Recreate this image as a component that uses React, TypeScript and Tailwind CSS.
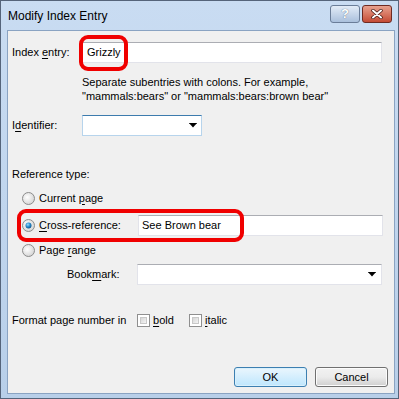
import React from "react";

const font = { fontFamily: '"Liberation Sans", Arial, sans-serif' };

function U({ children }: { children: React.ReactNode }) {
  return <span className="underline underline-offset-2">{children}</span>;
}

function Radio({ checked }: { checked?: boolean }) {
  return (
    <svg width="13" height="13" viewBox="0 0 13 13" className="shrink-0">
      <defs>
        <radialGradient id={checked ? "rgOn" : "rgOff"} cx="0.4" cy="0.4" r="0.7">
          <stop offset="0" stopColor="#ffffff" />
          <stop offset="1" stopColor="#cfcfcf" />
        </radialGradient>
        <radialGradient id="dot" cx="0.4" cy="0.35" r="0.7">
          <stop offset="0" stopColor="#9fdcf9" />
          <stop offset="0.5" stopColor="#2a8fd0" />
          <stop offset="1" stopColor="#0d4f86" />
        </radialGradient>
      </defs>
      <circle cx="6.5" cy="6.5" r="6" fill={`url(#${checked ? "rgOn" : "rgOff"})`} stroke="#8c8c8c" />
      {checked && <circle cx="6.5" cy="6.5" r="3" fill="url(#dot)" />}
    </svg>
  );
}

function Check() {
  return (
    <div className="h-[13px] w-[13px] shrink-0 border border-[#8f8f8f] bg-white p-[2px]">
      <div className="h-full w-full border border-[#c8c8c8] bg-gradient-to-br from-[#d6d6d6] to-[#f4f4f4]" />
    </div>
  );
}

function Arrow() {
  return (
    <svg width="8" height="5" viewBox="0 0 8 5" className="shrink-0">
      <path d="M0 0h8L4 4.5z" fill="#000" />
      <path d="M0 0h8" stroke="#000" />
    </svg>
  );
}

export default function App() {
  return (
    <div
      style={font}
      className="relative h-[399px] w-[399px] overflow-hidden border border-[#55647a] bg-gradient-to-b from-[#c9dcf2] to-[#b8cfe9] text-[11px] text-black"
    >
      {/* Title bar */}
      <div className="flex h-[29px] items-center pl-[7px] pr-[6px]">
        <span className="text-[12px] text-black">Modify Index Entry</span>
        <div className="ml-auto flex gap-[2px] self-start pt-[4px]">
          <div className="flex h-[18px] w-[30px] items-center justify-center rounded-[3px] border border-[#6a7d98] bg-gradient-to-b from-[#e3ecf7] to-[#aac0dc] text-[13px] font-bold text-white [text-shadow:0_0_1px_#3b4d66]">
            ?
          </div>
          <div className="flex h-[18px] w-[30px] items-center justify-center rounded-[3px] border border-[#6e2a22] bg-gradient-to-b from-[#e7a18f] to-[#c44a35]">
            <svg width="12" height="10" viewBox="0 0 12 10">
              <path d="M2 1.5l8 7M10 1.5l-8 7" stroke="#3c1410" strokeWidth="3.4" strokeLinecap="round" />
              <path d="M2 1.5l8 7M10 1.5l-8 7" stroke="#fff" strokeWidth="2" strokeLinecap="round" />
            </svg>
          </div>
        </div>
      </div>

      {/* Client area */}
      <div className="ml-[6px] mr-[3px] h-[364px] border border-[#8aa3c2] bg-[#f0f0f0] pl-[4px]">
        <div className="mt-[11px] flex h-[21px] items-center">
          <span className="w-[70px]">
            Index <U>e</U>ntry:
          </span>
          <div className="flex h-[21px] w-[300px] items-center border border-[#e2e3ea] border-t-[#abadb3] bg-white pl-[4px]">
            Grizzly
          </div>
        </div>

        <div className="mt-[12px] pl-[70px] leading-[14px]">
          <div>Separate subentries with colons. For example,</div>
          <div>"mammals:bears" or "mammals:bears:brown bear"</div>
        </div>

        <div className="mt-[12px] flex h-[21px] items-center">
          <span className="w-[70px]">
            I<U>d</U>entifier:
          </span>
          <div className="flex h-[21px] w-[120px] items-center justify-end border border-[#b7d4ec] border-t-[#3d7bad] bg-white pr-[4px]">
            <Arrow />
          </div>
        </div>

        <div className="mt-[31px] leading-[14px]">Reference type:</div>

        <div className="mt-[9px] flex h-[16px] items-center gap-[4px] pl-[10px]">
          <Radio />
          <span>
            Current <U>p</U>age
          </span>
        </div>

        <div className="mt-[9px] flex h-[21px] items-center pl-[10px]">
          <Radio checked />
          <span className="ml-[4px] w-[99px]">
            <U>C</U>ross-reference:
          </span>
          <div className="flex h-[21px] w-[245px] items-center border border-[#e2e3ea] border-t-[#abadb3] bg-white pl-[3px]">
            See Brown bear
          </div>
        </div>

        <div className="mt-[6px] flex h-[16px] items-center gap-[4px] pl-[10px]">
          <Radio />
          <span>
            Page <U>r</U>ange
          </span>
        </div>

        <div className="mt-[6px] flex h-[21px] items-center pl-[55px]">
          <span className="w-[70px]">
            Book<U>m</U>ark:
          </span>
          <div className="flex h-[21px] w-[245px] items-center justify-end border border-[#e2e3ea] border-t-[#abadb3] bg-white pr-[5px]">
            <Arrow />
          </div>
        </div>

        <div className="mt-[27px] flex h-[16px] items-center">
          <span className="w-[125px]">Format page number in</span>
          <Check />
          <span className="ml-[3px] w-[36px]">
            <U>b</U>old
          </span>
          <Check />
          <span className="ml-[3px]">
            <U>i</U>talic
          </span>
        </div>

        <div className="mt-[39px] flex justify-end gap-[8px] pr-[6px]">
          <button className="flex h-[20px] w-[73px] items-center justify-center rounded-[3px] border border-[#3c7fb1] bg-gradient-to-b from-[#eaf6fd] to-[#bee6fd] shadow-[inset_0_0_0_1px_#d9f0fc]">
            OK
          </button>
          <button className="flex h-[20px] w-[73px] items-center justify-center rounded-[3px] border border-[#707070] bg-gradient-to-b from-[#f2f2f2] via-[#ebebeb] to-[#cfcfcf] shadow-[inset_0_0_0_1px_#fcfcfc]">
            Cancel
          </button>
        </div>
      </div>

      {/* Highlight marks */}
      <div className="absolute left-[78px] top-[34px] h-[36px] w-[49px] rounded-[9px] border-[4px] border-[#f00000]" />
      <div className="absolute left-[16px] top-[208px] h-[33px] w-[227px] rounded-[9px] border-[4px] border-[#f00000]" />
    </div>
  );
}
